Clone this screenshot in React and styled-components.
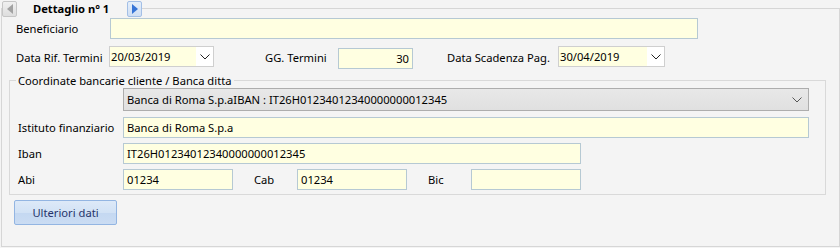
import React from 'react';
import styled, { createGlobalStyle } from 'styled-components';

const GlobalStyle = createGlobalStyle`
  body {
    margin: 0;
    background: #f4f4f4;
    font-family: "Noto Sans", "Liberation Sans", sans-serif;
    font-size: 11.2px;
    color: #000;
  }
`;

const Page = styled.div`
  width: 840px;
  height: 248px;
  background: #f4f4f4;
`;

const Frame = styled.fieldset`
  box-sizing: border-box;
  margin: 0 0 0 1px;
  padding: 0;
  width: 839px;
  height: 247px;
  border: 1px solid #d6d6d6;
  min-inline-size: 0;
`;

const FrameLegend = styled.legend`
  display: flex;
  align-items: center;
  height: 17px;
  padding: 0;
  margin: 0;
`;

const NavButton = styled.div`
  box-sizing: border-box;
  width: 15px;
  height: 16px;
  display: flex;
  align-items: center;
  justify-content: center;
  border: 1px solid ${(p) => (p.active ? '#a3bfe6' : '#c6c6c6')};
  background: ${(p) =>
    p.active
      ? 'linear-gradient(#e4eefa, #cfdff4)'
      : 'linear-gradient(#f0f0f0, #dedede)'};
  border-radius: 2px;
`;

const Title = styled.span`
  font-weight: bold;
  line-height: 17px;
  margin: 0 18px 0 16px;
`;

const Row = styled.div`
  display: flex;
  align-items: center;
  height: ${(p) => p.h || 21}px;
  margin-top: ${(p) => p.mt || 0}px;
  padding-left: ${(p) => p.pl || 0}px;
`;

const Label = styled.span`
  width: ${(p) => p.w}px;
  margin-left: ${(p) => p.ml || 0}px;
  flex-shrink: 0;
  white-space: nowrap;
  line-height: 16px;
  padding-top: 1px;
`;

const TextBox = styled.div`
  box-sizing: border-box;
  width: ${(p) => p.w}px;
  height: 21px;
  border: 1px solid #b6c9d3;
  background: #ffffe1;
  padding: 0 3px;
  display: flex;
  align-items: center;
  justify-content: ${(p) => (p.right ? 'flex-end' : 'flex-start')};
  align-self: ${(p) => p.align || 'center'};
  white-space: nowrap;
  overflow: hidden;
`;

const DateBox = styled.div`
  box-sizing: border-box;
  width: ${(p) => p.w}px;
  height: 21px;
  border: 1px solid #cfcfcf;
  display: flex;
  align-self: flex-start;
  background: #fff;
`;

const DateValue = styled.div`
  flex: 1;
  background: #ffffe1;
  padding-left: 1px;
  display: flex;
  align-items: center;
`;

const DateDrop = styled.div`
  width: 17px;
  display: flex;
  align-items: center;
  justify-content: center;
`;

const Group = styled.fieldset`
  box-sizing: border-box;
  margin: 4px 0 0 7px;
  padding: 0 0 4px 0;
  width: 817px;
  border: 1px solid #d9d9d9;
  min-inline-size: 0;
`;

const GroupLegend = styled.legend`
  margin-left: 6px;
  padding: 0 2px;
  line-height: 15px;
  height: 15px;
`;

const Combo = styled.div`
  box-sizing: border-box;
  width: 686px;
  height: 23px;
  border: 1px solid #adadad;
  background: linear-gradient(#e8e8e8, #e0e0e0);
  display: flex;
  align-items: center;
  justify-content: space-between;
  padding: 0 6px 0 3px;
`;

const Button = styled.button`
  box-sizing: border-box;
  display: block;
  margin: 5px 0 0 12px;
  width: 103px;
  height: 25px;
  border: 1px solid #93b5e2;
  border-radius: 2px;
  background: linear-gradient(#dde9f8 0%, #d2e2f5 50%, #c4d8f1 51%, #cadcf3 100%);
  color: #26336a;
  font-family: inherit;
  font-size: 11.2px;
  padding: 0;
`;

const Chevron = ({ color = '#333' }) => (
  <svg width="10" height="6" viewBox="0 0 10 6">
    <polyline points="0.5,0.5 5,5 9.5,0.5" fill="none" stroke={color} strokeWidth="1" />
  </svg>
);

const Triangle = ({ dir, color }) => (
  <svg width="6" height="10" viewBox="0 0 6 10">
    {dir === 'left' ? (
      <polygon points="6,0 0,5 6,10" fill={color} />
    ) : (
      <polygon points="0,0 6,5 0,10" fill={color} />
    )}
  </svg>
);

const DatePicker = ({ value, w }) => (
  <DateBox w={w}>
    <DateValue>{value}</DateValue>
    <DateDrop>
      <Chevron color="#222" />
    </DateDrop>
  </DateBox>
);

const App = () => {
  return (
    <Page>
      <GlobalStyle />
      <Frame>
        <FrameLegend>
          <NavButton>
            <Triangle dir="left" color="#a2a2a2" />
          </NavButton>
          <Title>Dettaglio n° 1</Title>
          <NavButton active>
            <Triangle dir="right" color="#3674d6" />
          </NavButton>
        </FrameLegend>

        <Row mt={1} pl={14}>
          <Label w={94}>Beneficiario</Label>
          <TextBox w={588} />
        </Row>

        <Row mt={7} pl={14} h={23}>
          <Label w={93}>Data Rif. Termini</Label>
          <DatePicker value="20/03/2019" w={105} />
          <Label w={73} ml={51}>GG. Termini</Label>
          <TextBox w={75} right align="flex-end">30</TextBox>
          <Label w={111} ml={34}>Data Scadenza Pag.</Label>
          <DatePicker value="30/04/2019" w={107} />
        </Row>

        <Group>
          <GroupLegend>Coordinate bancarie cliente / Banca ditta</GroupLegend>
          <Row h={23} pl={113}>
            <Combo>
              <span>Banca di Roma S.p.aIBAN : IT26H01234012340000000012345</span>
              <Chevron color="#555" />
            </Combo>
          </Row>
          <Row mt={6} pl={8}>
            <Label w={105}>Istituto finanziario</Label>
            <TextBox w={686}>Banca di Roma S.p.a</TextBox>
          </Row>
          <Row mt={5} pl={8}>
            <Label w={105}>Iban</Label>
            <TextBox w={458}>IT26H01234012340000000012345</TextBox>
          </Row>
          <Row mt={5} pl={8}>
            <Label w={105}>Abi</Label>
            <TextBox w={110}>01234</TextBox>
            <Label w={43} ml={21}>Cab</Label>
            <TextBox w={110}>01234</TextBox>
            <Label w={43} ml={21}>Bic</Label>
            <TextBox w={110} />
          </Row>
        </Group>

        <Button>Ulteriori dati</Button>
      </Frame>
    </Page>
  );
};

export default App;
